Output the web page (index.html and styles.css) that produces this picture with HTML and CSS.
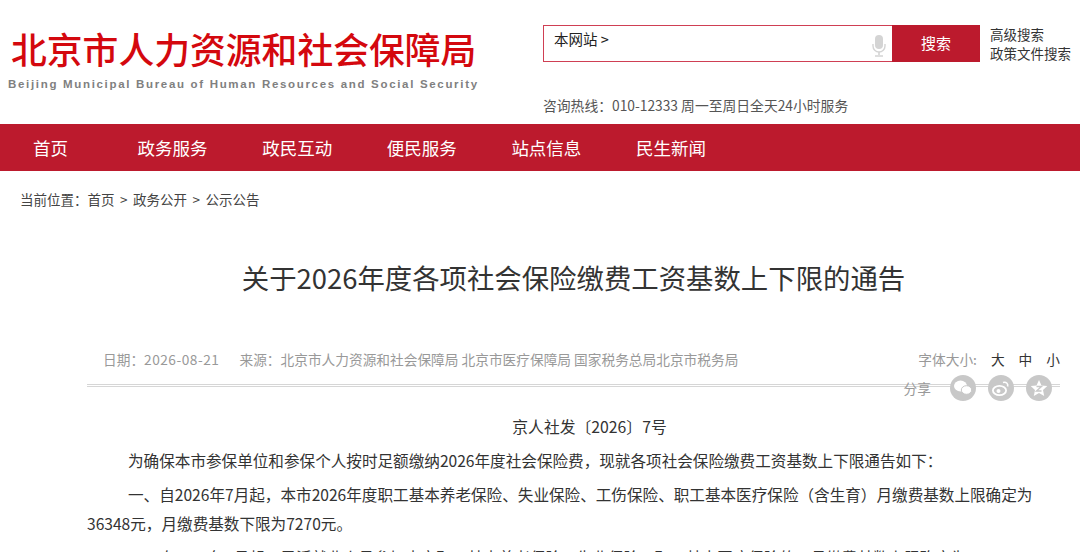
FILE: index.html
```html
<!DOCTYPE html>
<html lang="zh-CN">
<head>
  <meta charset="UTF-8" />
  <meta name="viewport" content="width=device-width, initial-scale=1.0"/>
  <title>关于2026年度各项社会保险缴费工资基数上下限的通告</title>
  <link rel="stylesheet" href="styles.css">
</head>
<body>

<header class="top">
  <div class="logo">
    <div class="logo-cn">北京市人力资源和社会保障局</div>
    <div class="logo-en">Beijing Municipal Bureau of Human Resources and Social Security</div>
  </div>
  <div class="tools">
    <div class="search-row">
      <div class="search">
        <div class="search-box">
          <span>本网站 &gt;</span>
          <svg class="mic" viewBox="0 0 14 22" width="14" height="22">
            <rect x="3" y="0" width="8" height="14" rx="4" fill="#d4d4d4"/>
            <path d="M1 9v2a6 6 0 0 0 12 0V9" fill="none" stroke="#d4d4d4" stroke-width="1.4"/>
            <path d="M7 17v3M3 21h8" stroke="#d4d4d4" stroke-width="1.6"/>
          </svg>
        </div>
        <button class="search-btn" type="button">搜索</button>
      </div>
      <div class="search-links">
        <a>高级搜索</a>
        <a>政策文件搜索</a>
      </div>
    </div>
    <div class="hotline">咨询热线：010-12333 周一至周日全天24小时服务</div>
  </div>
</header>

<nav class="nav">
  <a>首页</a>
  <a>政务服务</a>
  <a>政民互动</a>
  <a>便民服务</a>
  <a>站点信息</a>
  <a>民生新闻</a>
</nav>

<div class="crumbs">当前位置：<span class="crumb-first">首页</span><span class="sep">&gt;</span>政务公开<span class="sep">&gt;</span>公示公告</div>

<main class="article">
  <h1>关于2026年度各项社会保险缴费工资基数上下限的通告</h1>

  <div class="meta">
    <div class="meta-left">
      <span class="date">日期：<span class="date-num">2026-08-21</span></span>
      <span>来源：北京市人力资源和社会保障局 北京市医疗保障局 国家税务总局北京市税务局</span>
    </div>
    <div class="font-size">字体大小:<b>大</b><b>中</b><b>小</b></div>
    <div class="share">
      <span class="share-label">分享</span>
      <span class="share-icon">
        <svg viewBox="0 0 26 26" width="26" height="26">
          <ellipse cx="10.5" cy="11" rx="6.5" ry="5.4" fill="#fff"/>
          <ellipse cx="16.5" cy="15" rx="5.2" ry="4.3" fill="#fff" stroke="#c8c8c8"/>
        </svg>
      </span>
      <span class="share-icon">
        <svg viewBox="0 0 26 26" width="26" height="26">
          <ellipse cx="11.5" cy="15.5" rx="6.6" ry="4.6" fill="none" stroke="#fff" stroke-width="1.8"/>
          <circle cx="10.5" cy="16" r="2" fill="#fff"/>
          <path d="M15 7.5c3-1 5.5 1 4.6 4" fill="none" stroke="#fff" stroke-width="1.6"/>
        </svg>
      </span>
      <span class="share-icon">
        <svg viewBox="0 0 26 26" width="26" height="26">
          <path d="M13 5l2.5 5.4 5.8.7-4.3 4 1.2 5.8L13 18l-5.2 2.9L9 15.100l-4.300-4 5.800-.7z" fill="#fff"/>
          <path d="M10.500 11.500h5l-5 4.500h5" fill="none" stroke="#c8c8c8" stroke-width="1.400"/>
        </svg>
      </span>
    </div>
  </div>

  <p class="doc-no">京人社发〔2026〕7号</p>
  <p class="para">为确保本市参保单位和参保个人按时足额缴纳2026年度社会保险费，现就各项社会保险缴费工资基数上下限通告如下：</p>
  <p class="para">一、自2026年7月起，本市2026年度职工基本养老保险、失业保险、工伤保险、职工基本医疗保险（含生育）月缴费基数上限确定为36348元，月缴费基数下限为7270元。</p>
  <p class="para">二、自2026年7月起，灵活就业人员参加本市职工基本养老保险、失业保险、职工基本医疗保险的，月缴费基数上限确定为</p>
</main>

</body>
</html>
```

FILE: styles.css
```css
html, body {
  margin: 0;
  height: 552px;
  overflow: hidden;
}

body {
  font-family: "Noto Sans CJK SC", "Liberation Sans", sans-serif;
  background-color: #fff;
  color: #333;
}

.top {
  display: flex;
  justify-content: space-between;
  height: 124px;
  box-sizing: border-box;
  padding: 25px 9px 0 8px;
}

.logo-cn {
  font-size: 35.800px;
  line-height: 46px;
  font-weight: 500;
  color: #d4080e;
  padding-left: 3px;
  white-space: nowrap;
}

.logo-en {
  font-family: "Liberation Sans", sans-serif;
  font-size: 11.500px;
  font-weight: 700;
  line-height: 18px;
  letter-spacing: 1.680px;
  color: #808080;
  margin-top: 4px;
  white-space: nowrap;
}

.tools {
  width: 528px;
}

.search-row {
  display: flex;
}

.search {
  display: flex;
  width: 437px;
  height: 37px;
}

.search-box {
  flex: 1;
  display: flex;
  justify-content: space-between;
  box-sizing: border-box;
  border: 1px solid #cf3f53;
  border-right: none;
  padding: 3px 6px 0 10px;
  font-size: 14.500px;
  line-height: 20px;
  color: #222;
}

.mic {
  margin: 6px 0 0 0;
}

.search-btn {
  width: 88px;
  border: none;
  padding: 0 0 3px 0;
  background-color: #bc1a2d;
  color: #fff;
  font-family: inherit;
  font-size: 15px;
}

.search-links {
  margin-left: 10px;
  font-size: 13.500px;
  line-height: 19px;
  color: #333;
}

.search-links a {
  display: block;
  white-space: nowrap;
}

.hotline {
  margin-top: 32px;
  font-size: 13.800px;
  line-height: 20px;
  color: #555;
}

.nav {
  display: flex;
  align-items: center;
  gap: 54.600px;
  height: 47px;
  padding-left: 33px;
  background-color: #bc1a2d;
}

.nav a {
  font-size: 17.500px;
  color: #fff;
  white-space: nowrap;
}

.nav a:first-child {
  margin-right: 15px;
}

.crumbs {
  padding: 18px 0 0 20px;
  font-size: 13.500px;
  line-height: 20px;
  color: #444;
}

.crumb-first {
  margin-left: 0;
}

.sep {
  margin: 0 5.500px;
}

.article {
  padding: 0 20px 0 87px;
}

h1 {
  margin: 46px 0 0 0;
  text-align: center;
  font-size: 27.400px;
  font-weight: 400;
  line-height: 44px;
  color: #333;
}

.meta {
  position: relative;
  display: flex;
  justify-content: space-between;
  box-sizing: content-box;
  height: 35px;
  padding-top: 9px;
  margin-top: 41px;
  border-bottom: 3px double #d6d6d6;
  font-size: 13.700px;
  line-height: 20px;
  color: #999;
}

.meta-left {
  padding-left: 16px;
  white-space: nowrap;
}

.date {
  margin-right: 17px;
}

.date-num {
  letter-spacing: 0.500px;
}

.font-size b {
  margin-left: 14px;
  font-weight: 400;
  color: #333;
}

.font-size {
  white-space: nowrap;
}

.share {
  position: absolute;
  right: 8px;
  top: 35px;
  display: flex;
  align-items: center;
  gap: 12px;
}

.share-label {
  margin-right: 7px;
}

.share-icon {
  display: flex;
  width: 26px;
  height: 26px;
  border-radius: 50%;
  background-color: #c8c8c8;
}

.doc-no {
  margin: 27px 0 0 0;
  padding-left: 32px;
  text-align: center;
  font-size: 15.800px;
  line-height: 26px;
  color: #333;
}

.doc-no + .para {
  margin-top: 6px;
}

.para {
  margin: 5px 0 0 0;
  text-indent: 2.630em;
  font-size: 15.600px;
  line-height: 29px;
  color: #333;
}
```
